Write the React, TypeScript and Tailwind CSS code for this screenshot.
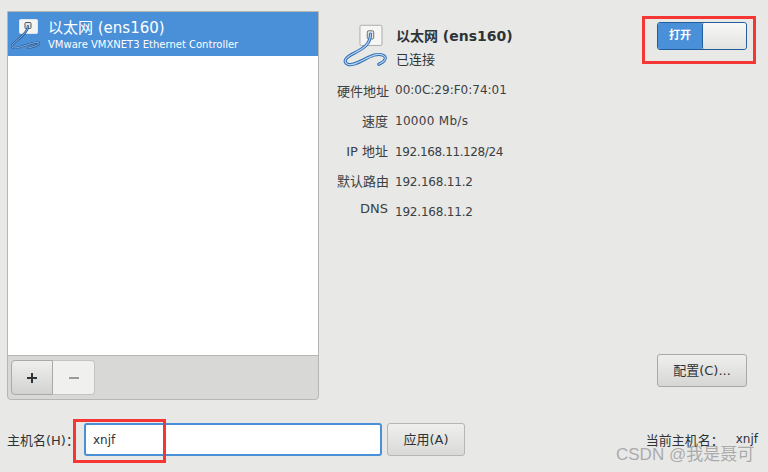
import React from 'react';

const FONT = "font-['DejaVu_Sans','Noto_Sans_CJK_SC',sans-serif]";

// network cable plugged in a socket
function EthernetIcon() {
  const cable = 'M30 12 C30 22 24 27 12 33 C2 38 0 42 5 45 C12 48 24 38 34 35 C42 33 49 36 45 41 C44 43 41 44 39 45';
  return (
    <svg width="48" height="44" viewBox="0 0 48 48" fill="none" className="overflow-visible">
      <rect x="18.5" y="2.5" width="24" height="22" rx="1.5" fill="#f6f6f5" stroke="#a5a5a3" />
      <rect x="26.5" y="8.5" width="7" height="9" rx="1.5" fill="#e6e6e6" stroke="#666" />
      <path d={cable} stroke="#2f6fb5" strokeWidth="3.4" strokeLinecap="round" />
      <path d={cable} stroke="#b5d1f0" strokeWidth="1.3" strokeLinecap="round" />
    </svg>
  );
}

function RowIcon() {
  const cable = 'M20 11 C20 18 10 24 5 29 C2 33 6 34 12 32 C20 30 28 26 31 28 C32 30 24 32 20 33';
  return (
    <svg width="36" height="38" viewBox="0 0 36 38" fill="none">
      <rect x="11.5" y="4.5" width="18" height="14" rx="1" fill="#f4f4f3" stroke="#dfe6ee" />
      <rect x="17" y="7.5" width="6" height="6" rx="1" fill="#e6e6e6" stroke="#555" />
      <path d={cable} stroke="#2a5c96" strokeWidth="2.2" strokeLinecap="round" />
      <path d={cable} stroke="#9cc0ea" strokeWidth="0.8" strokeLinecap="round" />
    </svg>
  );
}

function DetailRow({ label, value, labelClass, valueClass }: { label: string; value: string; labelClass?: string; valueClass?: string }) {
  return (
    <div className="flex items-center h-[30px]">
      <span className={`w-[51px] text-right text-[13px] leading-[16px] whitespace-nowrap text-[#3b4042] ${labelClass ?? ''}`}>{label}</span>
      <span className={`ml-[7px] text-[12px] leading-[16px] whitespace-nowrap text-[#3b4042] ${valueClass ?? ''}`}>{value}</span>
    </div>
  );
}

export default function App() {
  return (
    <div className={`relative w-[768px] h-[472px] overflow-hidden bg-[#e8e8e7] text-[#2e3436] ${FONT}`}>
      <div className="flex h-[411px] pl-[7px] pt-[11px]">
        {/* connection list */}
        <div className="flex flex-col w-[312px] h-[389px] border border-[#b6b6b3] rounded-b-[4px] bg-[#d8d8d6]">
          <div className="flex-1 bg-white">
            <div className="flex items-center h-[44px] bg-[#4a90d9] text-white">
              <RowIcon />
              <div className="ml-[4px] flex flex-col">
                <span className="text-[15px] leading-[20px] whitespace-nowrap">以太网 (ens160)</span>
                <span className="text-[10px] leading-[13px] whitespace-nowrap">VMware VMXNET3 Ethernet Controller</span>
              </div>
            </div>
          </div>
          <div className="flex h-[44px] border-t border-[#b6b6b3] px-[3px] pt-[4px]">
            <button className="flex items-center justify-center w-[42px] h-[35px] border border-[#a9a9a6] rounded-l-[4px] bg-gradient-to-b from-[#efefee] to-[#d2d2d0]">
              <svg width="12" height="12" viewBox="0 0 12 12"><path d="M6 1v10M1 6h10" stroke="#2e3436" strokeWidth="2" /></svg>
            </button>
            <button className="flex items-center justify-center w-[42px] h-[35px] border border-l-0 border-[#c4c4c2] rounded-r-[4px] bg-[#f0f0ef]">
              <svg width="12" height="12" viewBox="0 0 12 12"><path d="M1 6h10" stroke="#9a9c9c" strokeWidth="2" /></svg>
            </button>
          </div>
        </div>

        {/* connection details */}
        <div className="flex flex-col w-[442px] relative">
          <div className="flex ml-[22px] mt-[12px] h-[44px]">
            <EthernetIcon />
            <div className="ml-[7px] flex flex-col pt-[2px]">
              <span className="text-[14px] leading-[22px] font-bold whitespace-nowrap">以太网 (ens160)</span>
              <span className="text-[13px] leading-[20px] mt-[3px]">已连接</span>
            </div>
          </div>
          <div className="flex flex-col ml-[18px] mt-[10px]">
            <DetailRow label="硬件地址" value="00:0C:29:F0:74:01" valueClass="mt-[-4px]" />
            <DetailRow label="速度" value="10000 Mb/s" valueClass="mt-[-2px] tracking-[0.3px]" />
            <DetailRow label="IP 地址" value="192.168.11.128/24" valueClass="tracking-[-0.4px]" />
            <DetailRow label="默认路由" value="192.168.11.2" valueClass="tracking-[-0.2px]" />
            <DetailRow label="DNS" value="192.168.11.2" labelClass="mt-[-6px]" valueClass="tracking-[-0.2px]" />
          </div>
          <div className="absolute right-[14px] top-[11px] flex w-[90px] h-[28px] border border-[#215d9c] rounded-[3px] overflow-hidden">
            <span className="flex items-center justify-center w-[44px] bg-[#4a90d9] text-white text-[11px] font-bold">打开</span>
            <span className="flex-1 border-l border-[#215d9c] rounded-[2px] bg-gradient-to-b from-[#f8f8f7] to-[#e2e2e0]" />
          </div>
          <button className="absolute right-[14px] top-[343px] w-[90px] h-[33px] border border-[#a9a9a6] rounded-[3px] bg-gradient-to-b from-[#efefee] to-[#d6d6d4] text-[13px]">配置(C)...</button>
        </div>
      </div>

      {/* host name */}
      <div className="flex items-center h-[33px] mt-[12px] pl-[7px]">
        <span className="w-[77px] mt-[3px] text-[13px] whitespace-nowrap">主机名(H)：</span>
        <input readOnly value="xnjf" className="w-[298px] h-[33px] px-[7px] border-2 border-[#4a90d9] rounded-[3px] bg-white text-[12px] text-[#2e3436] outline-none" />
        <button className="ml-[5px] w-[78px] h-[33px] border border-[#b6b6b3] rounded-[3px] bg-gradient-to-b from-[#efefee] to-[#d9d9d7] text-[13px]">应用(A)</button>
        <span className="ml-auto mt-[3px] text-[13px] whitespace-nowrap">当前主机名：</span>
        <span className="ml-[12px] mr-[10px] mt-[-1px] text-[12px]">xnjf</span>
      </div>

      {/* annotations */}
      <div className="absolute left-[642px] top-[16px] w-[114px] h-[48px] border-[3px] border-[#f63535]" />
      <div className="absolute left-[73px] top-[419px] w-[93px] h-[44px] border-[3px] border-[#f63535]" />
      <span className="absolute left-[616px] top-[444px] text-[17px] leading-[22px] whitespace-nowrap text-[#8f8f8f]/70 font-['Liberation_Sans','Noto_Sans_CJK_SC',sans-serif]">CSDN @我是聂可</span>
    </div>
  );
}
